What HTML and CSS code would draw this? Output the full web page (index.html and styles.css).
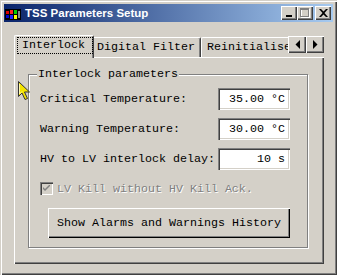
FILE: index.html
```html
<!DOCTYPE html>
<html lang="en">
<head>
  <meta charset="UTF-8" />
  <title>TSS Parameters Setup</title>
  <link rel="stylesheet" href="styles.css">
</head>
<body>
  <div class="window">
    <div class="titlebar">
      <svg class="app-icon" width="16" height="11" viewBox="0 0 16 11">
        <rect x="0" y="0" width="16" height="11" fill="#000" />
        <rect x="1" y="2" width="3" height="3" fill="#d00" />
        <rect x="1" y="6" width="3" height="3" fill="#00c" />
        <rect x="5" y="1" width="3" height="4" fill="#f22" />
        <rect x="5" y="6" width="3" height="4" fill="#22f" />
        <rect x="9" y="1" width="3" height="4" fill="#0c0" />
        <rect x="9" y="6" width="3" height="4" fill="#ff0" />
        <rect x="13" y="2" width="2" height="7" fill="#888" />
      </svg>
      <span class="title">TSS Parameters Setup</span>
      <div class="caption-buttons">
        <button class="cap-btn">
          <svg width="8" height="8" viewBox="0 0 8 8"><rect x="1" y="6" width="6" height="2" fill="#000" /></svg>
        </button>
        <button class="cap-btn" disabled>
          <svg width="10" height="10" viewBox="0 0 10 10">
            <rect x="1.5" y="1.5" width="8" height="8" fill="none" stroke="#fff" />
            <rect x="0.5" y="0.5" width="8" height="8" fill="none" stroke="#808080" />
            <rect x="0" y="0" width="9" height="2" fill="#808080" />
          </svg>
        </button>
        <button class="cap-btn close">
          <svg width="9" height="8" viewBox="0 0 9 8">
            <path d="M0 0h2l2.5 2.5L7 0h2L5.5 4 9 8H7L4.5 5.5 2 8H0l3.5-4z" fill="#000" />
          </svg>
        </button>
      </div>
    </div>

    <div class="client">
      <div class="tabstrip">
        <div class="tabs">
          <div class="tab active"><span class="focus">Interlock</span></div>
          <div class="tab tab-filter">Digital Filter</div>
          <div class="tab tab-reinit">Reinitialise</div>
        </div>
        <div class="tab-scroll">
          <button class="scroll-btn">
            <svg width="5" height="9" viewBox="0 0 5 9"><path d="M5 0v9L0.5 4.5z" fill="#000" /></svg>
          </button>
          <button class="scroll-btn">
            <svg width="5" height="9" viewBox="0 0 5 9"><path d="M0 0v9l4.5-4.5z" fill="#000" /></svg>
          </button>
        </div>
      </div>

      <div class="panel">
        <div class="group">
          <span class="legend">Interlock parameters</span>

          <div class="row">
            <span>Critical Temperature:</span>
            <div class="field">35.00 °C</div>
          </div>
          <div class="row">
            <span>Warning Temperature:</span>
            <div class="field">30.00 °C</div>
          </div>
          <div class="row">
            <span>HV to LV interlock delay:</span>
            <div class="field">10 s</div>
          </div>

          <div class="check-row">
            <span class="checkbox">
              <svg width="7" height="7" viewBox="0 0 7 7"><path d="M0 2l2 2 5-5v2L2 6 0 4z" fill="#808080" /></svg>
            </span>
            <span class="check-label">LV Kill without HV Kill Ack.</span>
          </div>

          <button class="history-btn">Show Alarms and Warnings History</button>
        </div>
      </div>
    </div>
  </div>

  <svg class="cursor" width="13" height="20" viewBox="0 0 13 20">
    <path d="M0.5 0.5v15l3.5-3.5 3 6.5 2.5-1-3-6.5h5z" fill="#f4e300" stroke="#333" stroke-width="1" />
    <path d="M1.5 3v10l2.5-2.5" fill="none" stroke="#fffbb0" stroke-width="1" />
  </svg>
</body>
</html>
```

FILE: styles.css
```css
body {
  margin: 0;
  background-color: #ffffff;
  font-family: "Liberation Mono", "Courier New", monospace;
  font-size: 11.67px;
  color: #000;
}

.window {
  width: 337px;
  height: 275px;
  box-sizing: border-box;
  padding: 4px 4px 0 4px;
  background-color: #d4d0c8;
  box-shadow: inset 1px 1px 0 #d4d0c8, inset 2px 2px 0 #ffffff,
              inset -1px -1px 0 #404040, inset -2px -2px 0 #808080;
}

.titlebar {
  height: 18px;
  display: flex;
  align-items: center;
  padding: 0 2px 0 1px;
  background: linear-gradient(to right, #0a246a, #a6caf0);
  color: #ffffff;
}

.app-icon {
  margin-top: 2px;
  margin-right: 4px;
}

.title {
  font-family: "Liberation Sans", Arial, sans-serif;
  font-weight: bold;
  font-size: 11.5px;
  flex: 1;
}

.caption-buttons {
  display: flex;
}

.cap-btn {
  width: 16px;
  height: 14px;
  padding: 0;
  border: none;
  background-color: #d4d0c8;
  box-shadow: inset 1px 1px 0 #ffffff, inset -1px -1px 0 #404040, inset -2px -2px 0 #808080;
  display: flex;
  align-items: center;
  justify-content: center;
}

.cap-btn.close {
  margin-left: 2px;
}

.client {
  padding: 13px 0 0 10px;
}

.tabstrip {
  position: relative;
  z-index: 1;
  width: 310px;
  height: 22px;
}

.tabs {
  display: flex;
  align-items: flex-end;
  height: 23px;
  overflow: hidden;
  width: 274px;
}

.tab {
  flex-shrink: 0;
  height: 20px;
  box-sizing: border-box;
  line-height: 18px;
  white-space: nowrap;
  background-color: #d4d0c8;
  border-top: 1px solid #ffffff;
  border-left: 1px solid #ffffff;
  border-right: 1px solid #404040;
  box-shadow: inset -1px 0 0 #808080;
  border-radius: 2px 2px 0 0;
  margin-bottom: 1px;
}

.tab.active {
  height: 23px;
  width: 80px;
  margin-bottom: 0;
  padding: 1px 0 0 2px;
  position: relative;
  z-index: 2;
}

.focus {
  display: block;
  width: 76px;
  height: 17px;
  box-sizing: border-box;
  border: 1px dotted #000;
  padding-left: 4px;
  line-height: 15px;
}

.tab-filter {
  width: 109px;
  margin-left: -2px;
  padding-left: 4px;
}

.tab-reinit {
  padding-left: 5px;
  width: 100px;
}

.tab-scroll {
  position: absolute;
  top: 1px;
  left: 274px;
  display: flex;
}

.scroll-btn {
  width: 18px;
  height: 17px;
  padding: 0;
  border: none;
  background-color: #d4d0c8;
  box-shadow: inset 1px 1px 0 #ffffff, inset -1px -1px 0 #404040, inset -2px -2px 0 #808080;
  display: flex;
  align-items: center;
  justify-content: center;
}

.panel {
  width: 310px;
  height: 207px;
  box-sizing: border-box;
  padding: 17px 16px 0 14px;
  box-shadow: inset 1px 1px 0 #ffffff, inset -1px -1px 0 #404040, inset -2px -2px 0 #808080;
}

.group {
  position: relative;
  height: 174px;
  box-sizing: border-box;
  border: 1px solid #808080;
  box-shadow: inset 1px 1px 0 #ffffff, 1px 1px 0 #ffffff;
  padding: 13px 17px 0 11px;
}

.legend {
  position: absolute;
  top: -8px;
  left: 8px;
  padding: 0 1px;
  background-color: #d4d0c8;
  line-height: 14px;
}

.row {
  display: flex;
  justify-content: space-between;
  align-items: center;
  height: 22px;
  margin-bottom: 8px;
}

.field {
  width: 72px;
  height: 22px;
  box-sizing: border-box;
  background-color: #ffffff;
  text-align: right;
  padding-right: 5px;
  line-height: 22px;
  box-shadow: inset 1px 1px 0 #808080, inset 2px 2px 0 #404040,
              inset -1px -1px 0 #ffffff, inset -2px -2px 0 #d4d0c8;
}

.check-row {
  display: flex;
  align-items: center;
  margin-top: 12px;
  height: 13px;
}

.checkbox {
  width: 13px;
  height: 13px;
  box-sizing: border-box;
  display: flex;
  align-items: center;
  justify-content: center;
  background-color: #d4d0c8;
  box-shadow: inset 1px 1px 0 #808080, inset 2px 2px 0 #404040,
              inset -1px -1px 0 #ffffff, inset -2px -2px 0 #d4d0c8;
  margin-right: 4px;
}

.check-label {
  color: #808080;
  text-shadow: 1px 1px 0 #ffffff;
}

.history-btn {
  display: block;
  margin: 13px 0 0 8px;
  width: 242px;
  height: 30px;
  padding: 0;
  border: none;
  font-family: inherit;
  font-size: inherit;
  color: #000;
  background-color: #d4d0c8;
  box-shadow: inset 1px 1px 0 #ffffff, inset -1px -1px 0 #000000, inset -2px -2px 0 #808080;
}

.cursor {
  position: absolute;
  left: 18px;
  top: 81px;
}
```
